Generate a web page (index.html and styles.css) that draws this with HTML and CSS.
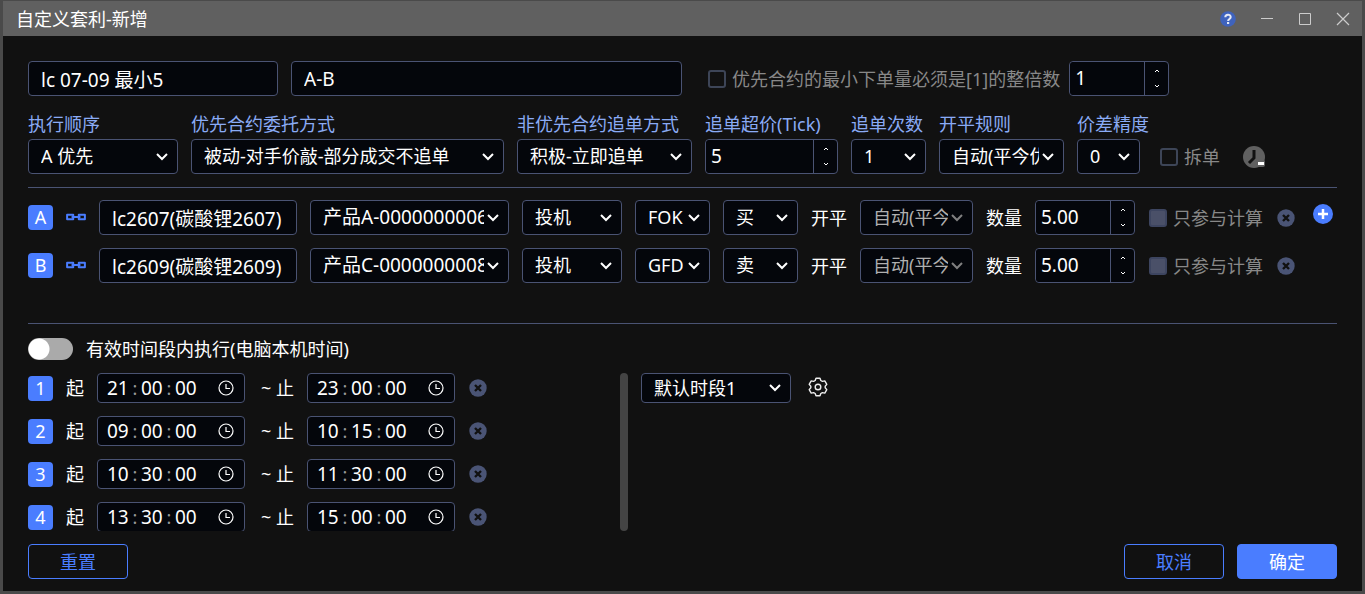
FILE: index.html
```html
<!DOCTYPE html>
<html lang="zh-CN">
<head>
    <meta charset="UTF-8">
    <meta name="viewport" content="width=device-width, initial-scale=1.0">
    <title>自定义套利-新增</title>
    <link rel="stylesheet" href="styles.css">
</head>
<body>
    <!-- 图标 -->
    <svg class="sprite" aria-hidden="true">
        <symbol id="i-up" viewBox="0 0 6 4"><path d="M1 3 3 1l2 2" fill="none" stroke="currentColor"/></symbol>
        <symbol id="i-down" viewBox="0 0 6 4"><path d="M1 1l2 2 2-2" fill="none" stroke="currentColor"/></symbol>
        <symbol id="i-link" viewBox="0 0 18 8">
            <path d="M1 1.500h5.500v4H1zM11.500 1.500H17v4h-5.500zM5 3.500h8" fill="none" stroke="currentColor" stroke-width="1.800" stroke-linejoin="round"/>
        </symbol>
        <symbol id="i-remove" viewBox="0 0 18 18">
            <circle cx="9" cy="9" r="8.700" fill="#4a5475"/>
            <path d="M6 6l6 6M12 6l-6 6" stroke="#111" stroke-width="2.400"/>
        </symbol>
        <symbol id="i-clock" viewBox="0 0 16 16">
            <path d="M8 1a7 7 0 1 0 0 14A7 7 0 0 0 8 1zM8 4v4.500h4" fill="none" stroke="currentColor" stroke-width="1.200"/>
        </symbol>
    </svg>

    <div class="window">
        <header class="titlebar">
            <h1>自定义套利-新增</h1>
            <button class="icon" aria-label="帮助">
                <svg width="16" height="16" viewBox="0 0 16 16">
                    <circle cx="8" cy="8" r="7.800" fill="#3f63bd"/>
                    <path d="M5.300 6.300C5.300 2.800 10.700 2.800 10.700 6.100 10.700 8 8.100 7.900 8.100 10" fill="none" stroke="#e4e9f5" stroke-width="2"/>
                    <path d="M7 11h2.200v2H7z" fill="#e4e9f5"/>
                </svg>
            </button>
            <button class="icon" aria-label="最小化">
                <svg width="14" height="14" viewBox="0 0 14 14"><path d="M1 6.500h12" stroke="#ccc"/></svg>
            </button>
            <button class="icon" aria-label="最大化">
                <svg width="14" height="14" viewBox="0 0 14 14"><path d="M1.500 1.500h11v11h-11z" fill="none" stroke="#ccc"/></svg>
            </button>
            <button class="icon" aria-label="关闭">
                <svg width="14" height="14" viewBox="0 0 14 14"><path d="M1 1l12 12M13 1L1 13" stroke="#ccc" stroke-width="1.200"/></svg>
            </button>
        </header>

        <main>
            <div class="row name-row">
                <input class="w-name" type="text" value="lc 07-09 最小5" aria-label="名称">
                <input class="w-formula" type="text" value="A-B" aria-label="公式">
                <label class="check multiple"><input type="checkbox">优先合约的最小下单量必须是[1]的整倍数</label>
                <div class="spin">
                    <input type="text" value="1" aria-label="整倍数">
                    <span class="steps">
                        <button aria-label="增加"><svg><use href="#i-up"/></svg></button>
                        <button aria-label="减少"><svg><use href="#i-down"/></svg></button>
                    </span>
                </div>
            </div>

            <div class="row rules">
                <div class="field w-order">
                    <label for="order">执行顺序</label>
                    <select id="order"><option>A 优先</option></select>
                </div>
                <div class="field w-entrust">
                    <label for="entrust">优先合约委托方式</label>
                    <select id="entrust"><option>被动-对手价敲-部分成交不追单</option></select>
                </div>
                <div class="field w-chase">
                    <label for="chase">非优先合约追单方式</label>
                    <select id="chase"><option>积极-立即追单</option></select>
                </div>
                <div class="field w-tick">
                    <label for="tick">追单超价(Tick)</label>
                    <div class="spin">
                        <input id="tick" type="text" value="5">
                        <span class="steps">
                            <button aria-label="增加"><svg><use href="#i-up"/></svg></button>
                            <button aria-label="减少"><svg><use href="#i-down"/></svg></button>
                        </span>
                    </div>
                </div>
                <div class="field w-small">
                    <label for="times">追单次数</label>
                    <select id="times"><option>1</option></select>
                </div>
                <div class="field w-rule">
                    <label for="rule">开平规则</label>
                    <select id="rule"><option>自动(平今优先)</option></select>
                </div>
                <div class="field w-precision">
                    <label for="precision">价差精度</label>
                    <select id="precision"><option>0</option></select>
                </div>
                <div class="split">
                    <label class="check"><input type="checkbox">拆单</label>
                    <button class="icon" aria-label="拆单时间">
                        <svg width="24" height="24" viewBox="0 0 24 24">
                            <circle cx="12" cy="12" r="11" fill="#606060"/>
                            <path d="M12 5v8l-5 5" fill="none" stroke="#111" stroke-width="3"/>
                            <rect x="14" y="15" width="9" height="7" rx="2" fill="#606060"/>
                            <path d="M16 18.500h6" stroke="#fff" stroke-width="3"/>
                        </svg>
                    </button>
                </div>
            </div>

            <div class="legs">
                <div class="row leg">
                    <span class="badge">A</span>
                    <svg class="link"><use href="#i-link"/></svg>
                    <input class="w-contract" type="text" value="lc2607(碳酸锂2607)" aria-label="合约A">
                    <select class="w-account" aria-label="账户"><option>产品A-0000000006</option></select>
                    <select class="w-hedge" aria-label="投保"><option>投机</option></select>
                    <select class="w-small" aria-label="报单类型"><option>FOK</option></select>
                    <select class="w-small" aria-label="买卖"><option>买</option></select>
                    <label for="oc-a">开平</label>
                    <select id="oc-a" class="w-offset" disabled><option>自动(平今优先)</option></select>
                    <label for="qty-a">数量</label>
                    <div class="spin">
                        <input id="qty-a" type="text" value="5.00">
                        <span class="steps">
                            <button aria-label="增加"><svg><use href="#i-up"/></svg></button>
                            <button aria-label="减少"><svg><use href="#i-down"/></svg></button>
                        </span>
                    </div>
                    <label class="check"><input type="checkbox" disabled>只参与计算</label>
                    <button class="icon" aria-label="删除"><svg class="remove"><use href="#i-remove"/></svg></button>
                    <button class="icon add" aria-label="添加">
                        <svg width="20" height="20" viewBox="0 0 20 20">
                            <circle cx="10" cy="10" r="10" fill="#4a7dff"/>
                            <path d="M5 10h10M10 5v10" stroke="#fff" stroke-width="2.500"/>
                        </svg>
                    </button>
                </div>
                <div class="row leg">
                    <span class="badge">B</span>
                    <svg class="link"><use href="#i-link"/></svg>
                    <input class="w-contract" type="text" value="lc2609(碳酸锂2609)" aria-label="合约B">
                    <select class="w-account" aria-label="账户"><option>产品C-0000000008</option></select>
                    <select class="w-hedge" aria-label="投保"><option>投机</option></select>
                    <select class="w-small" aria-label="报单类型"><option>GFD</option></select>
                    <select class="w-small" aria-label="买卖"><option>卖</option></select>
                    <label for="oc-b">开平</label>
                    <select id="oc-b" class="w-offset" disabled><option>自动(平今优先)</option></select>
                    <label for="qty-b">数量</label>
                    <div class="spin">
                        <input id="qty-b" type="text" value="5.00">
                        <span class="steps">
                            <button aria-label="增加"><svg><use href="#i-up"/></svg></button>
                            <button aria-label="减少"><svg><use href="#i-down"/></svg></button>
                        </span>
                    </div>
                    <label class="check"><input type="checkbox" disabled>只参与计算</label>
                    <button class="icon" aria-label="删除"><svg class="remove"><use href="#i-remove"/></svg></button>
                </div>
            </div>

            <label class="switch"><input type="checkbox">有效时间段内执行(电脑本机时间)</label>

            <div class="periods">
                <div class="period-list">
                    <div class="row period">
                        <span class="badge">1</span>
                        <span>起</span>
                        <div class="time">
                            <input type="text" value="21" aria-label="时"><i>:</i><input type="text" value="00" aria-label="分"><i>:</i><input type="text" value="00" aria-label="秒">
                            <svg><use href="#i-clock"/></svg>
                        </div>
                        <span class="until">~ 止</span>
                        <div class="time">
                            <input type="text" value="23" aria-label="时"><i>:</i><input type="text" value="00" aria-label="分"><i>:</i><input type="text" value="00" aria-label="秒">
                            <svg><use href="#i-clock"/></svg>
                        </div>
                        <button class="icon" aria-label="删除"><svg class="remove"><use href="#i-remove"/></svg></button>
                    </div>
                    <div class="row period">
                        <span class="badge">2</span>
                        <span>起</span>
                        <div class="time">
                            <input type="text" value="09" aria-label="时"><i>:</i><input type="text" value="00" aria-label="分"><i>:</i><input type="text" value="00" aria-label="秒">
                            <svg><use href="#i-clock"/></svg>
                        </div>
                        <span class="until">~ 止</span>
                        <div class="time">
                            <input type="text" value="10" aria-label="时"><i>:</i><input type="text" value="15" aria-label="分"><i>:</i><input type="text" value="00" aria-label="秒">
                            <svg><use href="#i-clock"/></svg>
                        </div>
                        <button class="icon" aria-label="删除"><svg class="remove"><use href="#i-remove"/></svg></button>
                    </div>
                    <div class="row period">
                        <span class="badge">3</span>
                        <span>起</span>
                        <div class="time">
                            <input type="text" value="10" aria-label="时"><i>:</i><input type="text" value="30" aria-label="分"><i>:</i><input type="text" value="00" aria-label="秒">
                            <svg><use href="#i-clock"/></svg>
                        </div>
                        <span class="until">~ 止</span>
                        <div class="time">
                            <input type="text" value="11" aria-label="时"><i>:</i><input type="text" value="30" aria-label="分"><i>:</i><input type="text" value="00" aria-label="秒">
                            <svg><use href="#i-clock"/></svg>
                        </div>
                        <button class="icon" aria-label="删除"><svg class="remove"><use href="#i-remove"/></svg></button>
                    </div>
                    <div class="row period">
                        <span class="badge">4</span>
                        <span>起</span>
                        <div class="time">
                            <input type="text" value="13" aria-label="时"><i>:</i><input type="text" value="30" aria-label="分"><i>:</i><input type="text" value="00" aria-label="秒">
                            <svg><use href="#i-clock"/></svg>
                        </div>
                        <span class="until">~ 止</span>
                        <div class="time">
                            <input type="text" value="15" aria-label="时"><i>:</i><input type="text" value="00" aria-label="分"><i>:</i><input type="text" value="00" aria-label="秒">
                            <svg><use href="#i-clock"/></svg>
                        </div>
                        <button class="icon" aria-label="删除"><svg class="remove"><use href="#i-remove"/></svg></button>
                    </div>
                </div>
                <div class="thumb"></div>
                <select class="w-preset" aria-label="时段模板"><option>默认时段1</option></select>
                <button class="icon gear" aria-label="时段设置">
                    <svg width="20" height="20" viewBox="0 0 20 20" fill="none" stroke="#eee" stroke-width="1.400" stroke-linejoin="round">
                        <path d="M8 1.200h4l.8 2.300 1.600.9 2.400-.5 2 3.500-1.600 1.800v1.600l1.600 1.800-2 3.500-2.400-.5-1.600.9-.8 2.300H8l-.8-2.300-1.600-.9-2.400.5-2-3.500 1.600-1.800V9.200L1.200 7.400l2-3.500 2.400.5 1.600-.9z"/>
                        <circle cx="10" cy="10" r="2.800"/>
                    </svg>
                </button>
            </div>

            <footer class="row">
                <button class="btn">重置</button>
                <button class="btn cancel">取消</button>
                <button class="btn primary">确定</button>
            </footer>
        </main>
    </div>
</body>
</html>
```
FILE: styles.css
```css
* {
    box-sizing: border-box;
}
body {
    margin: 0;
    background-color: #4a4a4a;
    color: #fff;
    font: 18px/24px "Noto Sans", "Noto Sans CJK SC", sans-serif;
}
input, select, button {
    font: inherit;
    color: inherit;
    margin: 0;
}
.sprite {
    display: none;
}
.window {
    display: flex;
    flex-direction: column;
    min-height: 100vh;
    border: 3px solid #4a4a4a;
    border-top-width: 1px;
    background-color: #111;
}
/* 标题栏 */
.titlebar {
    display: flex;
    align-items: center;
    gap: 24px;
    height: 35px;
    padding: 0 12px 0 13px;
    background-color: #606060;
}
.titlebar h1 {
    margin: 0 auto 0 0;
    font-size: 18px;
    font-weight: normal;
}
.icon {
    display: flex;
    flex: none;
    padding: 0;
    border: none;
    background: none;
    cursor: pointer;
}
main {
    display: flex;
    flex: 1;
    flex-direction: column;
    padding: 25px 25px 12px;
}
.row {
    display: flex;
    align-items: center;
    gap: 13px;
}
.row > * {
    flex: none;
}

/* 输入框与下拉框 */
input[type="text"], select {
    height: 35px;
    padding: 0 12px;
    border: 1px solid #4a5373;
    border-radius: 4px;
    background-color: #04060b;
    outline: none;
}
input[type="text"] {
    font-size: 19px;
}
select {
    appearance: none;
    padding: 0 24px 2px 12px;
    background-image: url("data:image/svg+xml,%3Csvg xmlns='http://www.w3.org/2000/svg' width='12' height='8'%3E%3Cpath d='M1 1l5 5 5-5' fill='none' stroke='%23fff' stroke-width='2'/%3E%3C/svg%3E");
    background-repeat: no-repeat;
    background-position: right 9px center;
}
select:disabled {
    color: #b0b0b0;
    opacity: 1;
    background-image: url("data:image/svg+xml,%3Csvg xmlns='http://www.w3.org/2000/svg' width='12' height='8'%3E%3Cpath d='M1 1l5 5 5-5' fill='none' stroke='%23808080' stroke-width='2'/%3E%3C/svg%3E");
}
.spin {
    display: flex;
    width: 100px;
    height: 35px;
    border: 1px solid #4a5373;
    border-radius: 4px;
    background-color: #04060b;
}
.spin input[type="text"] {
    flex: 1;
    min-width: 0;
    height: 33px;
    padding: 0 5px 2px;
    border: none;
}
.steps {
    display: flex;
    flex-direction: column;
    width: 24px;
    padding: 1px 0;
    border-left: 1px solid #4a5373;
}
.steps button {
    display: flex;
    flex: 1;
    align-items: center;
    justify-content: center;
    padding: 0;
    border: none;
    background: none;
}
.steps svg {
    width: 6px;
    height: 4px;
}
.check {
    display: flex;
    align-items: center;
    gap: 6px;
    color: #888;
}
.check input {
    appearance: none;
    width: 18px;
    height: 18px;
    border: 2px solid #3d4557;
    border-radius: 3px;
}
.check input:disabled {
    border-color: #3d4560;
    background-color: #4a5068;
}

.w-name { width: 250px; }
.w-formula { width: 391px; }
.w-order, .w-preset { width: 150px; }
.w-entrust { width: 313px; }
.w-chase { width: 175px; }
.w-tick { width: 133px; }
.w-small { width: 75px; }
.w-rule { width: 125px; }
.w-precision { width: 63px; }
.w-contract { width: 198px; }
.w-account { width: 199px; font-size: 19px; }
.w-hedge { width: 100px; }
.w-offset { width: 113px; }

.multiple {
    margin-left: 13px;
}
.name-row .spin {
    margin-left: -4px;
}
.rules {
    align-items: flex-end;
    margin-top: 16px;
    padding-bottom: 13px;
    border-bottom: 1px solid #4a5373;
}
.field {
    display: flex;
    flex-direction: column;
    gap: 3px;
    color: #fff;
}
.field label {
    color: #8aabf5;
    white-space: nowrap;
}
.field .spin {
    width: 100%;
}
.split {
    display: flex;
    align-items: center;
    gap: 22px;
    height: 35px;
    margin-left: 7px;
}

/* 合约腿 */
.legs {
    display: flex;
    flex-direction: column;
    gap: 13px;
    min-height: 136px;
    padding-top: 12px;
    border-bottom: 1px solid #4a5373;
}
.leg .check, .leg .icon {
    margin-left: 1px;
}
.badge {
    width: 25px;
    border-radius: 4px;
    background-color: #4a7dff;
    line-height: 25px;
    text-align: center;
}
.link {
    width: 20px;
    height: 9px;
    color: #4a7dff;
}
.remove {
    width: 18px;
    height: 18px;
}
.leg .add {
    align-self: flex-start;
    margin: 4px 0 0 5px;
}

/* 开关 */
.switch {
    display: flex;
    align-items: center;
    gap: 13px;
    margin-top: 13px;
}
.switch input {
    appearance: none;
    width: 45px;
    height: 22px;
    border-radius: 11px;
    background: radial-gradient(circle at 11px 11px, #fff 10px, #aaa 11px);
}

/* 时间段 */
.periods {
    display: flex;
    align-items: flex-start;
    height: 158px;
    margin-top: 12px;
}
.period-list {
    display: flex;
    flex-direction: column;
    gap: 13px;
    width: 592px;
    height: 158px;
    overflow: hidden;
}
.period {
    flex: none;
}
.period .icon {
    margin-left: 1px;
}
.until {
    width: 36px;
    text-align: right;
}
.time {
    display: flex;
    align-items: center;
    width: 148px;
    height: 30px;
    padding: 0 10px 0 9px;
    border: 1px solid #4a5373;
    border-radius: 4px;
    background-color: #04060b;
}
.time input[type="text"] {
    width: 22px;
    height: 28px;
    padding: 0;
    border: none;
    background: none;
}
.time i {
    width: 12px;
    color: #999;
    font-style: normal;
    text-align: center;
}
.time svg {
    width: 16px;
    height: 16px;
    margin-left: auto;
}
.thumb {
    width: 8px;
    height: 158px;
    margin-right: 13px;
    border-radius: 4px;
    background-color: #444;
}
.w-preset {
    height: 30px;
    padding-bottom: 0;
}
.gear {
    margin: 4px 0 0 17px;
}

footer {
    margin-top: 13px;
}
.btn {
    width: 100px;
    height: 35px;
    border: 1px solid #4a7dff;
    border-radius: 4px;
    background: none;
    color: #4a7dff;
    cursor: pointer;
}
.cancel {
    margin-left: auto;
}
.primary {
    background-color: #4a7dff;
    color: #fff;
}
```
